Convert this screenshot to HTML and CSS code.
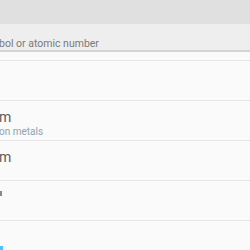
FILE: index.html
```html
<!DOCTYPE html>
<html>
<head>
<title>Elements</title>
<link rel="stylesheet" href="styles.css">
</head>
<body>
<div class="toolbar"></div>
<div class="search">
  <span class="hint">bol or atomic number</span>
</div>
<ul class="list">
  <li class="row"></li>
  <li class="row">
    <span class="name">m</span>
    <span class="group">on metals</span>
  </li>
  <li class="row">
    <span class="name">m</span>
  </li>
  <li class="row">
    <div class="stub dark"></div>
  </li>
  <li class="row">
    <div class="stub blue"></div>
  </li>
</ul>
</body>
</html>
```

FILE: styles.css
```css
body {
  margin: 0;
  font-family: Roboto, "Noto Sans", sans-serif;
  background-color: #fafafa;
  overflow: hidden;
}

.toolbar {
  height: 24px;
  background-color: #e0e0e0;
}

.search {
  height: 26px;
  background-color: #eeeeee;
  border-bottom: 2px solid #d4d4d4;
  display: flex;
  align-items: flex-end;
}

.hint {
  font-size: 10.5px;
  color: #7a7a7a;
  line-height: 13px;
  padding-bottom: 0;
  margin-left: -1px;
}

.list {
  list-style: none;
  margin: 8px 0 0;
  padding: 0;
  border-top: 1px solid #e6e6e6;
}

.row {
  height: 40px;
  border-bottom: 1px solid #e6e6e6;
  display: flex;
  flex-direction: column;
  padding-top: 8px;
  box-sizing: border-box;
}

.name {
  font-size: 14px;
  line-height: 16px;
  color: #5a5a5a;
  margin-left: -1px;
}

.group {
  font-size: 10px;
  line-height: 13px;
  color: #90a4ae;
  margin-left: -1px;
}

.stub {
  width: 2px;
}

.stub.dark {
  height: 5px;
  margin-top: 2px;
  background-color: #888;
}

.stub.blue {
  width: 3px;
  height: 5px;
  margin-top: 17px;
  background-color: #4fc3f7;
}
```
